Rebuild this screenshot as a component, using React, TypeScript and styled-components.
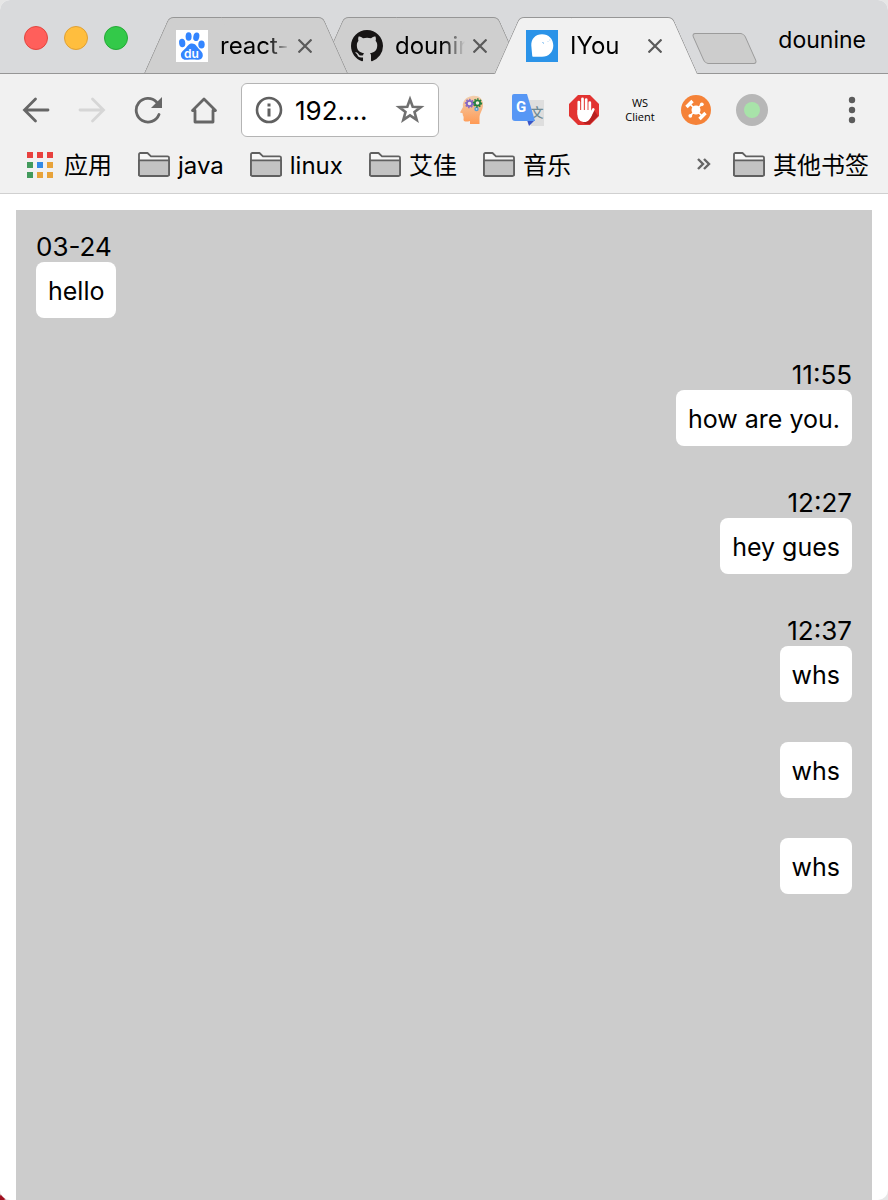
import React from "react";
import styled, { createGlobalStyle, css } from "styled-components";

const font = `Inter, "Noto Sans CJK SC", sans-serif`;

const GlobalStyle = createGlobalStyle`
  *, *::before, *::after { box-sizing: border-box; }
  body {
    margin: 0;
    background: radial-gradient(circle at 0 100%, #a01020 0 4px, transparent 6px), #e6e6e6;
    font-family: ${font};
    font-size: 24px;
    color: #000;
  }
  button { border: 0; padding: 0; background: none; font: inherit; color: inherit; }
  svg { display: block; flex: none; }
`;

const Window = styled.div`
  display: flex;
  flex-direction: column;
  min-height: 100vh;
  border-radius: 10px;
  overflow: hidden;
  background: #fff;
`;

const TitleBar = styled.header`
  display: flex;
  height: 74px;
  padding-left: 24px;
  background: #d9dadc;
  border-bottom: 1px solid #969696;
`;

const WindowControls = styled.div`
  display: flex;
  gap: 16px;
  width: 120px;
  padding-top: 26px;
`;

const WindowButton = styled.button<{ $fill: string; $edge: string }>`
  width: 24px;
  height: 24px;
  border-radius: 50%;
  background: ${(p) => p.$fill};
  border: 1px solid ${(p) => p.$edge};
`;

const Tabs = styled.div`
  display: flex;
  padding-top: 17px;
`;

const Tab = styled.div<{ $active?: boolean; $level: number }>`
  --fill: ${(p) => (p.$active ? "#f1f1f1" : "#cfcfcf")};
  position: relative;
  isolation: isolate;
  z-index: ${(p) => p.$level};
  display: flex;
  align-items: center;
  width: 203px;
  height: ${(p) => (p.$active ? 57 : 56)}px;
  padding: 1px 35px 0 32px;
  & + & { margin-left: -28px; }
  &::before, &::after {
    content: "";
    position: absolute;
    z-index: -1;
    top: 0;
    bottom: 0;
    width: 50%;
    background: var(--fill);
    border: 0 solid #969696;
    border-top-width: 1px;
    transform-origin: bottom;
  }
  &::before {
    left: 0;
    border-left-width: 1px;
    border-top-left-radius: 5px;
    transform: skewX(-24deg);
  }
  &::after {
    right: 0;
    border-right-width: 1px;
    border-top-right-radius: 5px;
    transform: skewX(24deg);
  }
`;

const TabTitle = styled.button`
  flex: 1;
  min-width: 0;
  margin: 0 6px 0 12px;
  overflow: hidden;
  white-space: nowrap;
  text-align: left;
  line-height: 32px;
  mask-image: linear-gradient(to right, #000 48px, transparent 70px);
`;

const NewTab = styled.button`
  width: 53px;
  height: 31px;
  margin: 33px 0 0 1px;
  border: 1px solid #9b9b9b;
  border-radius: 4px;
  background: #cdcdcd;
  transform: skewX(24deg);
`;

const Profile = styled.button`
  margin-left: auto;
  padding: 24px 22px 0 0;
  height: 56px;
  font-size: 23px;
  line-height: 32px;
`;

const Chrome = styled.div`
  background: #f1f1f1;
  border-bottom: 1px solid #d0d0d0;
  height: 120px;
`;

const Toolbar = styled.div`
  display: flex;
  align-items: center;
  height: 64px;
  padding: 0 8px;
  margin-top: 4px;
`;

const ToolButton = styled.button`
  flex: none;
  display: flex;
  align-items: center;
  justify-content: center;
  width: 56px;
  height: 56px;
  color: #666;
  &:disabled { color: #d6d6d6; }
`;

const AddressBar = styled.div`
  flex: 1;
  display: flex;
  align-items: center;
  min-width: 0;
  height: 54px;
  margin: 0 5px 0 9px;
  padding: 0 13px;
  border: 1px solid #b4b4b4;
  border-radius: 6px;
  background: #fff;
  color: #606060;
`;

const Address = styled.input`
  flex: 1;
  width: 0;
  min-width: 0;
  padding: 2px 0 0 12px;
  border: 0;
  outline: 0;
  background: none;
  font: 26px/32px ${font};
  color: #000;
`;

const SocketClient = styled.span`
  font: 11px/14px "Open Sans", sans-serif;
  color: #000;
  text-align: center;
`;

const Extensions = styled.div`
  display: flex;
  margin-right: 44px;
`;

const Bookmarks = styled.nav`
  display: flex;
  align-items: center;
  gap: 26px;
  height: 48px;
  padding: 0 19px 0 27px;
  white-space: nowrap;
`;

const Bookmark = styled.a<{ $wide?: boolean }>`
  display: flex;
  align-items: center;
  gap: ${(p) => (p.$wide ? 11 : 8)}px;
  line-height: 32px;
  color: #000;
  text-decoration: none;
  svg { margin-bottom: 3px; }
`;

const More = styled.button`
  margin-left: auto;
  margin-right: -4px;
  padding-bottom: 4px;
  color: #666;
`;

const Page = styled.main`
  flex: 1;
  display: flex;
  padding: 16px 16px 0;
`;

const Chat = styled.ol`
  flex: 1;
  display: flex;
  flex-direction: column;
  gap: 40px;
  margin: 0;
  padding: 20px;
  list-style: none;
  background: #ccc;
  font-size: 25px;
  line-height: 32px;
`;

const Message = styled.li<{ $mine?: boolean }>`
  display: flex;
  flex-direction: column;
  align-items: flex-start;
  ${(p) => p.$mine && css`align-items: flex-end;`}
`;

const Time = styled.time`
  height: 32px;
  font-size: 26px;
  line-height: 34px;
`;

const Bubble = styled.p`
  margin: 0;
  padding: 13px 12px 11px;
  border-radius: 8px;
  background: #fff;
`;

const CloseIcon = () => (
  <svg width="14" height="14" viewBox="0 0 14 14" stroke="#5a5a5a" strokeWidth="2.2">
    <path d="M.5.5l13 13M13.500.5l-13 13" />
  </svg>
);

const BaiduIcon = () => (
  <svg width="32" height="32" viewBox="0 0 32 32">
    <path fill="#fff" d="M0 0h32v32H0z" />
    <g fill="#3385ff">
      <ellipse cx="6.200" cy="13" rx="3.100" ry="4.200" transform="rotate(-8 6.200 13)" />
      <ellipse cx="12.600" cy="6.500" rx="3" ry="4.300" />
      <ellipse cx="20.300" cy="6.800" rx="3" ry="4.300" transform="rotate(12 20.300 6.800)" />
      <ellipse cx="25.500" cy="14.500" rx="3.200" ry="4.100" />
      <path d="M16 13.500c3.600 0 4.600 3 7 5.500 2 2.100 4 3.600 3.800 6.500-.3 3.600-3 4.500-6 4.300-3-.3-6-.3-9 0-3.500.4-6.700-1-6.900-4.600-.1-3 2.300-4.500 4.400-6.600 2.200-2.300 3.200-5.100 6.700-5.100z" />
    </g>
    <text x="15.500" y="27.500" textAnchor="middle" fontSize="12" fontWeight="600" fontFamily="Inter, sans-serif" fill="#fff">du</text>
  </svg>
);

const GithubIcon = () => (
  <svg width="32" height="32" viewBox="0 0 16 16" fill="#171515">
    <path d="M8 0C3.58 0 0 3.58 0 8c0 3.54 2.29 6.53 5.47 7.59.4.07.55-.17.55-.38 0-.19-.01-.82-.01-1.49-2.01.37-2.53-.49-2.69-.94-.09-.23-.48-.94-.82-1.13-.28-.15-.68-.52-.01-.53.63-.01 1.08.58 1.23.82.72 1.21 1.87.87 2.33.66.07-.52.28-.87.51-1.07-1.78-.2-3.64-.89-3.64-3.95 0-.87.31-1.59.82-2.15-.08-.2-.36-1.02.08-2.12 0 0 .67-.21 2.2.82.64-.18 1.32-.27 2-.27.68 0 1.36.09 2 .27 1.53-1.04 2.2-.82 2.2-.82.44 1.1.16 1.92.08 2.12.51.56.82 1.27.82 2.15 0 3.07-1.87 3.75-3.65 3.95.29.25.54.73.54 1.48 0 1.07-.01 1.93-.01 2.2 0 .21.15.46.55.38A8.013 8.013 0 0 0 16 8c0-4.42-3.58-8-8-8z" />
  </svg>
);

const ChatIcon = () => (
  <svg width="32" height="32" viewBox="0 0 32 32">
    <path fill="#2b93e8" d="M0 0h32v32H0z" />
    <path fill="#fff" d="M16 4.200c6.600 0 11.300 4.800 11.300 11.300S22.600 26.800 16 26.800H7.500c-.9 0-1.300-.4-1.300-1.300L5.300 15.500C5 9 9.400 4.200 16 4.200z" />
    <path fill="none" stroke="#a8d2f5" strokeWidth="1" d="M16 12.500h1.500v1.500M21.500 11l.8.800M23.800 9.500v1" />
  </svg>
);

const BackIcon = () => (
  <svg width="28" height="28" viewBox="0 0 28 28" fill="none" stroke="currentColor" strokeWidth="2.800" strokeLinecap="round">
    <path d="M26 14H3M13.500 3l-11 11 11 11" />
  </svg>
);

const ForwardIcon = () => (
  <svg width="28" height="28" viewBox="0 0 28 28" fill="none" stroke="currentColor" strokeWidth="2.800" strokeLinecap="round">
    <path d="M2 14h23M14.500 3l11 11-11 11" />
  </svg>
);

const ReloadIcon = () => (
  <svg width="28" height="28" viewBox="0 0 28 28" fill="none" stroke="currentColor" strokeWidth="2.800" strokeLinecap="round">
    <path d="M25 18.500A11.800 11.800 0 1 1 22.500 6" />
    <path d="M28 1v11H17z" fill="currentColor" stroke="none" />
  </svg>
);

const HomeIcon = () => (
  <svg width="28" height="28" viewBox="0 0 28 28" fill="none" stroke="currentColor" strokeWidth="2.800" strokeLinecap="round" strokeLinejoin="round">
    <path d="M2.500 14.500L14 3l11.500 11.500H23V26H5V14.500z" />
  </svg>
);

const InfoIcon = () => (
  <svg width="28" height="28" viewBox="0 0 28 28">
    <circle cx="14" cy="14" r="12" fill="none" stroke="currentColor" strokeWidth="2.600" />
    <path fill="currentColor" d="M12.500 7.500h3v3h-3zM12.500 12.500h3v8h-3z" />
  </svg>
);

const StarIcon = () => (
  <svg width="30" height="30" viewBox="0 0 30 30" fill="none" stroke="#707070" strokeWidth="2.600">
    <path d="M15 4.300l2.700 7.500 8.200.3-6.400 5 2.200 7.800-6.700-4.500-6.700 4.500 2.200-7.800-6.400-5 8.200-.3z" />
  </svg>
);

const HeadIcon = () => (
  <svg width="28" height="30" viewBox="0 0 28 30">
    <defs>
      <linearGradient id="skin" x2="0" y2="1">
        <stop stopColor="#f2cfae" />
        <stop offset="1" stopColor="#ff9a54" />
      </linearGradient>
    </defs>
    <path fill="url(#skin)" d="M14 1C20 0 25 3 25 10c0 5-3.500 8-3.500 13V29H12v-3c-3 .8-6 1-6.500-1 0-2 .5-3-.5-4.500-.6-.8.200-1.500-.5-2.300L2 17.500l3-5.500C4 6 8 2 14 1z" />
    <g fill="#f5e8dd" strokeWidth="1.800">
      <circle cx="11.500" cy="8.500" r="2.700" stroke="#8266c6" />
      <circle cx="19.500" cy="8" r="2.700" stroke="#26803e" />
      <circle cx="18.500" cy="14" r="1.500" stroke="#5aa2d6" strokeWidth="1.500" />
    </g>
    <g fill="none" strokeWidth="1.400" strokeDasharray="1.500 1.500">
      <circle cx="11.500" cy="8.500" r="4" stroke="#8266c6" />
      <circle cx="19.500" cy="8" r="4" stroke="#26803e" />
    </g>
  </svg>
);

const TranslateIcon = () => (
  <svg width="32" height="32" viewBox="0 0 32 32">
    <path fill="#dedede" d="M14 6h18v26H19z" />
    <text x="25" y="23" textAnchor="middle" fontSize="13" fontWeight="500" fontFamily="'Noto Sans CJK SC', sans-serif" fill="#6f8a94">文</text>
    <path fill="#3a56c8" d="M15 26h8l-6 6z" />
    <path fill="#5797f5" d="M2 0h13l8 27H3a3 3 0 0 1-3-3V2a2 2 0 0 1 2-2z" />
    <text x="9" y="18" textAnchor="middle" fontSize="15" fontWeight="700" fontFamily="Roboto, sans-serif" fill="#fff">G</text>
  </svg>
);

const StopHandIcon = () => (
  <svg width="30" height="30" viewBox="0 0 30 30">
    <path fill="#e23331" d="M9 0h12l9 9v12l-9 9H9l-9-9V9z" />
    <path fill="#b82020" d="M14 27l7-3 4-9 4 6-8 8h-5z" />
    <g stroke="#fff" strokeWidth="2.700" strokeLinecap="round">
      <path d="M9.800 7v12M13.500 3.800v12M17.200 4.500v12M20.800 7.500v10M24.300 14.500l-3.500 7" />
    </g>
    <path fill="#fff" d="M8.500 15h13.600v4.500l.600.500c-1.700 4.500-3.700 7-7.200 7s-6.500-2-7-6.500z" />
  </svg>
);

const DroneIcon = () => (
  <svg width="30" height="30" viewBox="0 0 30 30">
    <circle cx="15" cy="15" r="15" fill="#f58238" />
    <g stroke="#fff" strokeLinecap="round">
      <path strokeWidth="1.600" d="M8.500 8.500l13 13M20.500 9.500l-11 11" />
      <path strokeWidth="3.400" strokeLinecap="butt" d="M5.500 12l6-6M18.500 24l6-6" />
    </g>
    <g fill="#fff">
      <circle cx="15" cy="15" r="4.500" />
      <circle cx="20.800" cy="9.300" r="1.900" />
      <circle cx="9.300" cy="20.800" r="1.900" />
    </g>
  </svg>
);

const StatusIcon = () => (
  <svg width="32" height="32" viewBox="0 0 32 32">
    <circle cx="16" cy="16" r="16" fill="#b7b7b7" />
    <circle cx="16" cy="16" r="8" fill="#a8e3a9" />
  </svg>
);

const MenuIcon = () => (
  <svg width="8" height="28" viewBox="0 0 8 28" fill="#5c5c5c">
    <circle cx="4" cy="4" r="3.200" />
    <circle cx="4" cy="14" r="3.200" />
    <circle cx="4" cy="24" r="3.200" />
  </svg>
);

const appColors = ["#e8413f", "#e8413f", "#e8413f", "#429a5c", "#3289e6", "#e8a33a", "#429a5c", "#e8a33a", "#e8a33a"];

const AppsIcon = () => (
  <svg width="26" height="26" viewBox="0 0 26 26">
    {appColors.map((color, i) => (
      <rect key={i} x={(i % 3) * 10} y={Math.floor(i / 3) * 10} width="6" height="6" fill={color} />
    ))}
  </svg>
);

const FolderIcon = () => (
  <svg width="32" height="25" viewBox="0 0 32 25" stroke="#606060" strokeWidth="1.800" strokeLinejoin="round">
    <path fill="#f8f8f8" d="M1 23V2.500Q1 1 2.500 1h7L13 4.300h16.500Q31 4.300 31 5.500V23z" />
    <path fill="#c3c3c3" d="M1 8.300h30V22.500Q31 24 29.500 24h-27Q1 24 1 22.500z" />
  </svg>
);

const MoreIcon = () => (
  <svg width="14" height="12" viewBox="0 0 14 12" fill="none" stroke="currentColor" strokeWidth="2.400">
    <path d="M1 1l5 5-5 5M7 1l5 5-5 5" />
  </svg>
);

const tabs = [
  { title: "react-", icon: <BaiduIcon />, level: 2 },
  { title: "dounin", icon: <GithubIcon />, level: 1 },
  { title: "IYou", icon: <ChatIcon />, level: 3, active: true },
];

const extensions = [
  { name: "Mind", icon: <HeadIcon /> },
  { name: "Translate", icon: <TranslateIcon /> },
  { name: "Blocker", icon: <StopHandIcon /> },
  { name: "WS Client", icon: <SocketClient>WS<br />Client</SocketClient> },
  { name: "Drone", icon: <DroneIcon /> },
  { name: "Status", icon: <StatusIcon /> },
];

const messages = [
  { time: "03-24", text: "hello" },
  { time: "11:55", text: "how are you.", mine: true },
  { time: "12:27", text: "hey gues", mine: true },
  { time: "12:37", text: "whs", mine: true },
  { text: "whs", mine: true },
  { text: "whs", mine: true },
];

export default function App() {
  return (
    <Window>
      <GlobalStyle />
      <TitleBar>
        <WindowControls>
          <WindowButton aria-label="Close" $fill="#ff5f5b" $edge="#e2463f" />
          <WindowButton aria-label="Minimize" $fill="#ffbe3e" $edge="#dfa035" />
          <WindowButton aria-label="Zoom" $fill="#33c949" $edge="#24a936" />
        </WindowControls>
        <Tabs>
          {tabs.map((tab) => (
            <Tab key={tab.title} $active={tab.active} $level={tab.level}>
              {tab.icon}
              <TabTitle>{tab.title}</TabTitle>
              <button aria-label="Close tab"><CloseIcon /></button>
            </Tab>
          ))}
        </Tabs>
        <NewTab aria-label="New tab" />
        <Profile>dounine</Profile>
      </TitleBar>
      <Chrome>
        <Toolbar>
          <ToolButton aria-label="Back"><BackIcon /></ToolButton>
          <ToolButton aria-label="Forward" disabled><ForwardIcon /></ToolButton>
          <ToolButton aria-label="Reload"><ReloadIcon /></ToolButton>
          <ToolButton aria-label="Home"><HomeIcon /></ToolButton>
          <AddressBar>
            <InfoIcon />
            <Address aria-label="Address" defaultValue="192...." />
            <StarIcon />
          </AddressBar>
          <Extensions>
            {extensions.map((item) => (
              <ToolButton key={item.name} aria-label={item.name}>{item.icon}</ToolButton>
            ))}
          </Extensions>
          <ToolButton aria-label="Menu"><MenuIcon /></ToolButton>
        </Toolbar>
        <Bookmarks>
          <Bookmark href="#apps" $wide><AppsIcon />应用</Bookmark>
          <Bookmark href="#java"><FolderIcon />java</Bookmark>
          <Bookmark href="#linux"><FolderIcon />linux</Bookmark>
          <Bookmark href="#aijia"><FolderIcon />艾佳</Bookmark>
          <Bookmark href="#music"><FolderIcon />音乐</Bookmark>
          <More aria-label="More bookmarks"><MoreIcon /></More>
          <Bookmark href="#other"><FolderIcon />其他书签</Bookmark>
        </Bookmarks>
      </Chrome>
      <Page>
        <Chat>
          {messages.map((message, i) => (
            <Message key={i} $mine={message.mine}>
              {message.time && <Time>{message.time}</Time>}
              <Bubble>{message.text}</Bubble>
            </Message>
          ))}
        </Chat>
      </Page>
    </Window>
  );
}
